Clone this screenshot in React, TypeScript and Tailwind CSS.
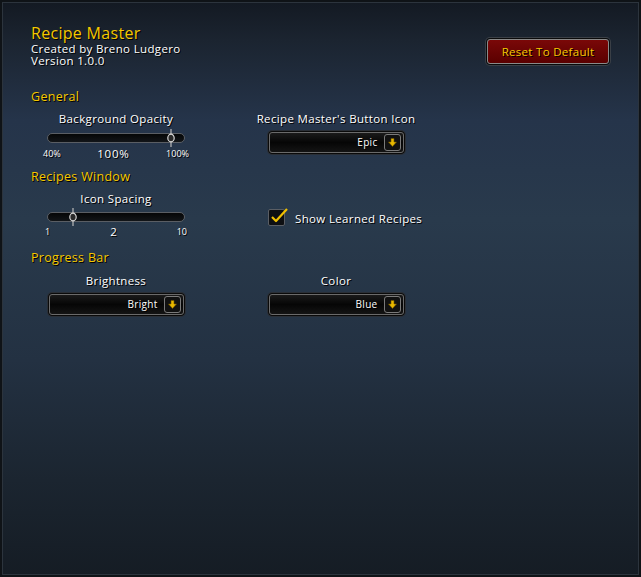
import React from "react";

const shadow = "[text-shadow:1px_1px_0_#000]";

function Arrow() {
  return (
    <svg width="9" height="9" viewBox="0 0 9 9">
      <path d="M3 0.5 H6 V4 H8.5 L4.5 8.5 L0.5 4 H3 Z" fill="#e8b800" stroke="#6b5200" strokeWidth="0.6" />
    </svg>
  );
}

function Dropdown({ value }: { value: string }) {
  return (
    <div className="w-[137px] h-[23px] rounded-[4px] border border-[#0a0a0a] bg-[#111] shadow-[0_0_0_1px_#2a2f36]">
      <div className="h-full rounded-[3px] border border-[#6a6a6a] bg-[linear-gradient(180deg,#1a1a1a,#060606_50%,#141414)] flex items-center justify-end pr-[2px]">
        <span className={`text-[10px] tracking-[0.3px] text-white mr-[6px] ${shadow}`}>{value}</span>
        <div className="w-[17px] h-[17px] rounded-[3px] border border-[#7a7a7a] bg-[#111] flex items-center justify-center">
          <Arrow />
        </div>
      </div>
    </div>
  );
}

function Slider({ pos }: { pos: number }) {
  return (
    <div className="relative w-[138px] h-[10px] rounded-full border border-[#5a5e64] bg-[linear-gradient(180deg,#050607,#121518)]">
      <div className="absolute top-[-5px]" style={{ left: pos - 5 }}>
        <svg width="10" height="18" viewBox="0 0 10 18">
          <line x1="5" y1="0" x2="5" y2="18" stroke="#bbb" strokeWidth="1.2" />
          <ellipse cx="5" cy="9" rx="3.2" ry="3.8" fill="#2a2a2a" stroke="#d8d8d8" strokeWidth="1.2" />
        </svg>
      </div>
    </div>
  );
}

const label = `whitespace-nowrap text-[11.5px] leading-[14px] tracking-[0.35px] text-white ${shadow}`;
const heading = `text-[12.5px] leading-[16px] tracking-[0.3px] text-[#f5c800] ${shadow}`;

export default function App() {
  return (
    <div
      className="relative w-[641px] h-[577px] overflow-hidden bg-[linear-gradient(180deg,#131922_0px,#1b2430_40px,#25344a_120px,#293a4c_220px,#233142_360px,#1b2530_480px,#151c24_577px)] shadow-[inset_0_0_0_2px_#0f1317,inset_0_0_0_3px_#2c343d]"
      style={{ fontFamily: '"Open Sans", "Noto Sans", sans-serif' }}
    >
      <div className="pt-[23px] pl-[31px] pr-[31px] flex justify-between">
        <div>
          <div className={`text-[16px] leading-[20px] tracking-[0.3px] text-[#f5c800] ${shadow}`}>Recipe Master</div>
          <div className={`text-[11.5px] leading-[12px] tracking-[0.35px] text-white ${shadow}`}>Created by Breno Ludgero</div>
          <div className={`text-[11.5px] leading-[11px] tracking-[0.35px] text-white ${shadow}`}>Version 1.0.0</div>
        </div>
        <div className="mt-[15px] w-[124px] h-[27px] rounded-[4px] border border-[#0a0a0a] shadow-[0_0_0_1px_#3a3f46]">
          <div className="h-full rounded-[3px] border border-[#8a8a8a] bg-[linear-gradient(180deg,#7a0808,#5a0000)] flex items-center justify-center">
            <span className={`text-[11.5px] tracking-[0.3px] text-[#f5c800] ${shadow}`}>Reset To Default</span>
          </div>
        </div>
      </div>

      <div className="pl-[31px]">
        <div className={`mt-[23px] ${heading}`}>General</div>
        <div className="grid grid-cols-[170px_170px] gap-x-[50px]">
          <div className="flex flex-col items-center">
            <div className={`mt-[7px] ${label}`}>Background Opacity</div>
            <div className="mt-[7px]"><Slider pos={123} /></div>
            <div className="mt-[2px] w-[146px] flex justify-between items-center text-white">
              <span className={`text-[9px] ${shadow}`}>40%</span>
              <span className={`text-[11.5px] tracking-[0.8px] ${shadow}`}>100%</span>
              <span className={`text-[9px] ${shadow}`}>100%</span>
            </div>
          </div>
          <div className="flex flex-col items-center">
            <div className={`mt-[7px] ${label}`}>Recipe Master's Button Icon</div>
            <div className="mt-[5px]"><Dropdown value="Epic" /></div>
          </div>
        </div>

        <div className={`mt-[7px] ${heading}`}>Recipes Window</div>
        <div className="grid grid-cols-[170px_170px] gap-x-[50px]">
          <div className="flex flex-col items-center">
            <div className={`mt-[7px] ${label}`}>Icon Spacing</div>
            <div className="mt-[6px]"><Slider pos={25} /></div>
            <div className="mt-[1px] w-[142px] flex justify-between items-center text-white">
              <span className={`text-[9px] ${shadow}`}>1</span>
              <span className={`text-[11.5px] ${shadow}`}>2</span>
              <span className={`text-[9px] ${shadow}`}>10</span>
            </div>
          </div>
          <div className="pl-[17px] pt-[24px] flex items-center self-start">
            <div className="relative shrink-0 w-[17px] h-[17px] rounded-[2px] border border-[#5a5e64] bg-[#0d0f12]">
              <svg className="absolute left-[1px] top-[-3px]" width="20" height="18" viewBox="0 0 20 18">
                <path d="M2 10 L6 14 L17 2" fill="none" stroke="#f0c000" strokeWidth="2.2" strokeLinejoin="round" />
              </svg>
            </div>
            <span className={`ml-[10px] mt-[2px] ${label}`}>Show Learned Recipes</span>
          </div>
        </div>

        <div className={`mt-[9px] ${heading}`}>Progress Bar</div>
        <div className="grid grid-cols-[170px_170px] gap-x-[50px]">
          <div className="flex flex-col items-center">
            <div className={`mt-[8px] ${label}`}>Brightness</div>
            <div className="mt-[5px]"><Dropdown value="Bright" /></div>
          </div>
          <div className="flex flex-col items-center">
            <div className={`mt-[8px] ${label}`}>Color</div>
            <div className="mt-[5px]"><Dropdown value="Blue" /></div>
          </div>
        </div>
      </div>
    </div>
  );
}
